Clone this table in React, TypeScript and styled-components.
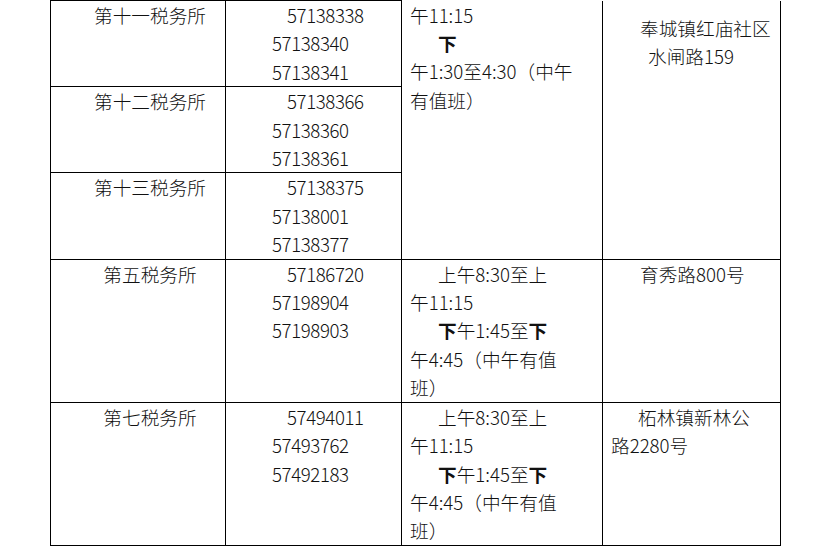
import React from "react";
import styled, { createGlobalStyle } from "styled-components";

const GlobalStyle = createGlobalStyle`
  html, body { margin: 0; padding: 0; background: #fff; }
  body { font-family: "Noto Sans CJK SC", sans-serif; color: #000; }
`;

const Page = styled.div`
  width: 830px;
  height: 546px;
  overflow: hidden;
  padding-left: 50px;
  box-sizing: border-box;
  background: #fff;
`;

const Table = styled.table`
  border-collapse: collapse;
  table-layout: fixed;
  width: 730px;
  font-family: "Noto Sans CJK SC", sans-serif;
  font-size: 18.67px;
  font-weight: 300;
  line-height: 28.4px;
  color: #111;
`;

const Cell = styled.td<{ $noTop?: boolean }>`
  border: 1px solid #000;
  border-top: ${(p) => (p.$noTop ? "none" : "1px solid #000")};
  vertical-align: top;
  padding: 0;
`;

const NameCell = styled(Cell)`
  text-align: center;
  padding-left: 24px;
`;

const PhoneCell = styled(Cell)`
  padding-left: 46px;
  letter-spacing: -0.4px;
`;

const TextCell = styled(Cell)<{ $padTop?: number }>`
  padding-left: 8px;
  padding-top: ${(p) => p.$padTop ?? 0}px;
`;

const Line = styled.div<{ $indent?: number }>`
  white-space: nowrap;
  padding-left: ${(p) => p.$indent ?? 0}px;
`;

const Strong = styled.b`
  font-weight: 700;
`;

type L = { t: React.ReactNode; i?: number };

const Xia = () => <Strong>下</Strong>;

const hoursStd: L[] = [
  { t: "上午8:30至上", i: 28 },
  { t: "午11:15" },
  { t: (<><Xia />午1:45至<Xia /></>), i: 28 },
  { t: "午4:45（中午有值" },
  { t: "班）" },
];

const hoursTop: L[] = [
  { t: "午11:15" },
  { t: <Xia />, i: 28 },
  { t: "午1:30至4:30（中午" },
  { t: "有值班）" },
];

const Lines = ({ items }: { items: L[] }) => (
  <>
    {items.map((l, k) => (
      <Line key={k} $indent={l.i}>
        {l.t}
      </Line>
    ))}
  </>
);

const Phones = ({ nums }: { nums: string[] }) => (
  <>
    {nums.map((n, k) => (
      <Line key={n} $indent={k === 0 ? 15 : 0}>
        {n}
      </Line>
    ))}
  </>
);

export default function App() {
  return (
    <Page>
      <GlobalStyle />
      <Table>
        <colgroup>
          <col style={{ width: 175 }} />
          <col style={{ width: 176 }} />
          <col style={{ width: 201 }} />
          <col style={{ width: 178 }} />
        </colgroup>
        <tbody>
          <tr>
            <NameCell>第十一税务所</NameCell>
            <PhoneCell>
              <Phones nums={["57138338", "57138340", "57138341"]} />
            </PhoneCell>
            <TextCell rowSpan={3} $noTop>
              <Lines items={hoursTop} />
            </TextCell>
            <TextCell rowSpan={3} $noTop $padTop={13}>
              <Lines items={[{ t: "奉城镇红庙社区", i: 29 }, { t: "水闸路159", i: 37 }]} />
            </TextCell>
          </tr>
          <tr>
            <NameCell>第十二税务所</NameCell>
            <PhoneCell>
              <Phones nums={["57138366", "57138360", "57138361"]} />
            </PhoneCell>
          </tr>
          <tr>
            <NameCell>第十三税务所</NameCell>
            <PhoneCell>
              <Phones nums={["57138375", "57138001", "57138377"]} />
            </PhoneCell>
          </tr>
          <tr>
            <NameCell>第五税务所</NameCell>
            <PhoneCell>
              <Phones nums={["57186720", "57198904", "57198903"]} />
            </PhoneCell>
            <TextCell>
              <Lines items={hoursStd} />
            </TextCell>
            <TextCell>
              <Lines items={[{ t: "育秀路800号", i: 29 }]} />
            </TextCell>
          </tr>
          <tr>
            <NameCell>第七税务所</NameCell>
            <PhoneCell>
              <Phones nums={["57494011", "57493762", "57492183"]} />
            </PhoneCell>
            <TextCell>
              <Lines items={hoursStd} />
            </TextCell>
            <TextCell>
              <Lines items={[{ t: "柘林镇新林公", i: 27 }, { t: "路2280号" }]} />
            </TextCell>
          </tr>
        </tbody>
      </Table>
    </Page>
  );
}
